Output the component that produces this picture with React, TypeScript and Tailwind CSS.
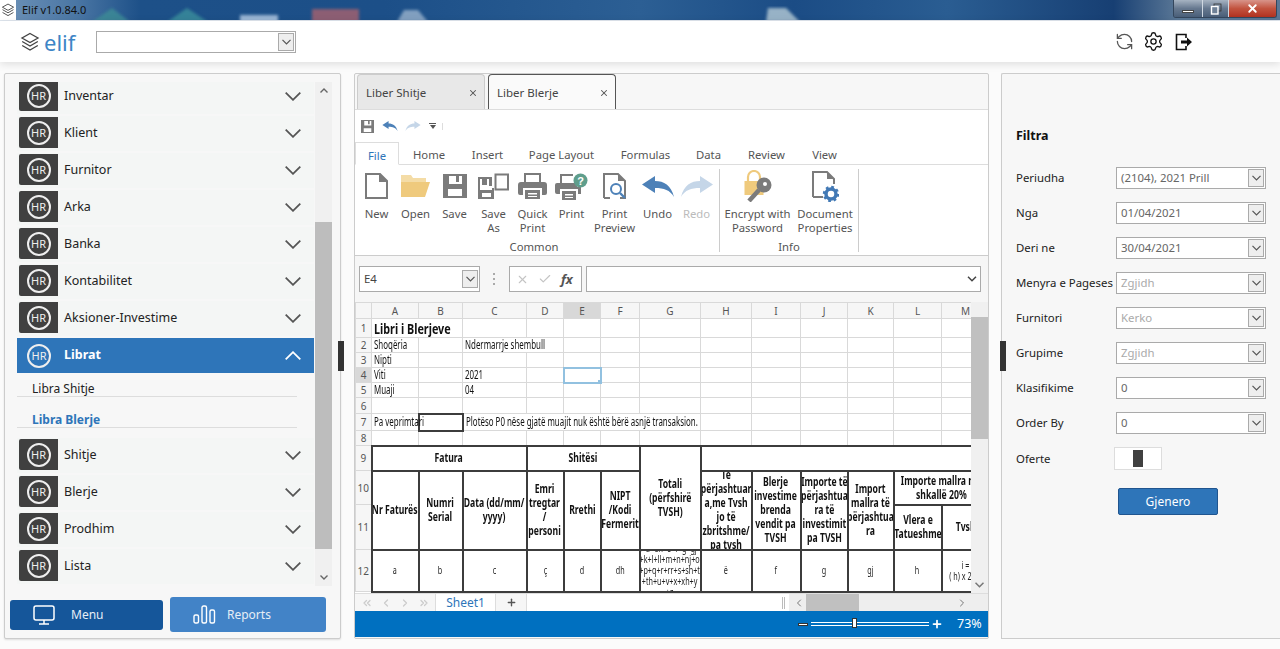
import React from 'react';
import { RefreshCcw, Settings, Plus, ChevronsLeft, ChevronLeft, ChevronRight, ChevronsRight, X, Check } from 'lucide-react';

const UI_FONT = "font-['Open_Sans',sans-serif]";
const SHEET_FONT = "font-['DejaVu_Sans_Condensed','DejaVu_Sans',sans-serif]";

const Chevron = ({ className = 'stroke-[#555]' }: { className?: string }) => (
  <svg width="16" height="9" viewBox="0 0 16 9" fill="none" className={className} strokeWidth="1.8">
    <path d="M0.7 0.7 8 7.8 15.3 0.7" />
  </svg>
);

const LayersIcon = ({ size }: { size: number }) => (
  <svg width={size} height={size} viewBox="0 0 20 20" fill="none" stroke="#444" strokeWidth="1.3">
    <path d="M10 1.5 18 6l-8 4.5L2 6z" />
    <path d="M2.2 9.5 10 14l7.8-4.5" />
    <path d="M2.2 13.5 10 18l7.8-4.5" />
  </svg>
);

// combo box shared by the header, the formula bar and the filters
function Combo({ value, muted, className }: { value?: string; muted?: boolean; className: string }) {
  return (
    <div className={`flex items-center justify-between border border-[#aaa] bg-white pl-[4px] pr-[1px] ${className}`}>
      <span className={`text-[11.4px] ${muted ? 'text-[#aaa]' : 'text-[#666]'}`}>{value}</span>
      <span className="flex h-[18px] w-[16px] items-center justify-center border border-[#aaa] bg-[#eee]">
        <svg width="9" height="6" viewBox="0 0 9 6" fill="none" stroke="#555" strokeWidth="1.2">
          <path d="M0.5 0.8 4.5 4.8 8.5 0.8" />
        </svg>
      </span>
    </div>
  );
}

function TitleBar() {
  return (
    <div className="relative flex h-[21px] shrink-0 items-center overflow-hidden border-b border-[#dfe6ee] bg-[linear-gradient(90deg,#6f93b8_0%,#4a76a4_6%,#1d5088_11%,#1c4f88_30%,#2c5f94_50%,#1b4c85_62%,#2a5d92_74%,#173f73_87%,#5a7796_92%)]">
      <svg className="absolute inset-0" width="1280" height="21">
        <defs>
          <filter id="soft">
            <feGaussianBlur stdDeviation="1.6" />
          </filter>
        </defs>
        <g filter="url(#soft)" opacity="0.8">
          <path d="M92 22 112 8 130 22z" fill="#3d8d96" />
          <path d="M167 22 187 8 208 22z" fill="#3b8f9c" />
          <rect x="240" y="15" width="38" height="8" fill="#b9cfe6" />
          <rect x="312" y="9" width="47" height="14" fill="#a8626e" />
          <path d="M397 22 404 10H418L428 22z" fill="#9ab3cd" />
          <path d="M766 22 768 8H786L800 22z" fill="#b6cbd6" />
        </g>
      </svg>
      <span className="relative flex h-[20px] w-[16px] items-center justify-center bg-white">
        <LayersIcon size={14} />
      </span>
      <span className="relative ml-[6px] text-[11px] text-[#111]">Elif v1.0.84.0</span>
      <div className="absolute right-[3px] top-0 flex h-[18px] overflow-hidden rounded-b-[3px] border border-t-0 border-[#34465c]">
        <span className="flex w-[29px] items-end justify-center border-r border-[#cfd8e2] bg-[linear-gradient(#a6b3c2,#66788f_50%,#4a5f79)] pb-[4px]">
          <span className="h-[3px] w-[12px] border border-[#444] bg-white" />
        </span>
        <span className="flex w-[26px] items-center justify-center border-r border-[#cfd8e2] bg-[linear-gradient(#a6b3c2,#66788f_50%,#4a5f79)]">
          <svg width="12" height="12" viewBox="0 0 12 12" fill="none" stroke="#fff" strokeWidth="1.4">
            <rect x="4" y="1" width="7" height="7" stroke="#333" strokeWidth="0.8" />
            <rect x="1.5" y="3.5" width="6.5" height="7.5" fill="#6f8197" />
          </svg>
        </span>
        <span className="flex w-[47px] items-center justify-center bg-[linear-gradient(#d8948a,#c2533f_50%,#b13220)]">
          <X size={13} strokeWidth={3.5} className="text-white" />
        </span>
      </div>
    </div>
  );
}

function Header() {
  return (
    <header className="relative z-10 flex h-[41px] shrink-0 items-center bg-white pl-[20px] shadow-[0_2px_8px_rgba(0,0,0,0.12)]">
      <LayersIcon size={20} />
      <span className="ml-[4px] w-[52px] text-[22px] leading-none text-[#3d85c6]">elif</span>
      <Combo className="h-[22px] w-[200px]" />
      <div className="ml-auto mr-[87px] flex items-center">
        <RefreshCcw size={19} strokeWidth={1.6} className="text-[#555]" />
        <Settings size={21} strokeWidth={1.5} className="ml-[9px] text-[#111]" />
        <svg width="18" height="18" viewBox="0 0 18 18" className="ml-[11px]" fill="none">
          <path d="M11 5V1.5H1.5v15H11V13" stroke="#111" strokeWidth="1.6" />
          <path d="M6 7.5h6V4.5L17 9l-5 4.5v-3H6z" fill="#111" />
        </svg>
      </div>
    </header>
  );
}

const HrBadge = () => (
  <span className="flex h-[24px] w-[24px] items-center justify-center rounded-full border-2 border-[#eee] text-[11px] leading-none text-[#eee]">HR</span>
);

function NavRow({ label }: { label: string }) {
  return (
    <div className="mb-[2px] flex h-[35px] items-start bg-[#f4f6f5] pl-[2px] pr-[13px] pt-[1px]">
      <span className="flex h-[31px] w-[39px] items-center justify-center rounded-l-[2px] bg-[#404040]">
        <HrBadge />
      </span>
      <span className="ml-[6px] mt-[7px] text-[12.5px] text-[#222]">{label}</span>
      <span className="ml-auto mt-[12px]">
        <Chevron />
      </span>
    </div>
  );
}

function Sidebar() {
  return (
    <aside className="relative flex w-[337px] shrink-0 flex-col rounded-[2px] border border-[#ccc] bg-[#f7f7f7] shadow-[0_1px_2px_rgba(0,0,0,0.12)]">
      <div className="ml-[12px] mt-[8px] flex h-[504px]">
        <div className="w-[297px] overflow-hidden">
          <div className="-mt-[3px]">
            {['Inventar', 'Klient', 'Furnitor', 'Arka', 'Banka', 'Kontabilitet', 'Aksioner-Investime'].map((l) => (
              <NavRow key={l} label={l} />
            ))}
            <div className="flex h-[35px] items-center bg-[#2e75b9] pl-[10px] pr-[13px]">
              <HrBadge />
              <span className="ml-[13px] text-[12.5px] font-bold text-white">Librat</span>
              <span className="ml-auto rotate-180">
                <Chevron className="stroke-white" />
              </span>
            </div>
            <div className="mb-[10px]">
              <div className="flex h-[24px] w-[280px] items-end border-b border-[#ddd] pb-[1px] pl-[15px] text-[12px] leading-[13px] text-[#222]">Libra Shitje</div>
              <div className="flex h-[31px] w-[280px] items-end border-b border-[#ddd] pb-[1px] pl-[15px] text-[12px] font-bold leading-[13px] text-[#2e75b9]">Libra Blerje</div>
            </div>
            {['Shitje', 'Blerje', 'Prodhim', 'Lista'].map((l) => (
              <NavRow key={l} label={l} />
            ))}
          </div>
        </div>
        <div className="ml-[1px] flex w-[17px] flex-col bg-[#f0f0f0]">
          <div className="flex h-[140px] justify-center pt-[6px]">
            <svg width="8" height="5" viewBox="0 0 8 5" fill="none" stroke="#666" strokeWidth="1.4"><path d="M0.5 4.5 4 1l3.5 3.5" /></svg>
          </div>
          <div className="h-[327px] bg-[#bdbdbd]" />
          <div className="flex flex-1 items-end justify-center pb-[6px]">
            <svg width="8" height="5" viewBox="0 0 8 5" fill="none" stroke="#666" strokeWidth="1.4"><path d="M0.5 0.5 4 4l3.5-3.5" /></svg>
          </div>
        </div>
      </div>
      <div className="ml-[5px] mt-[11px] flex items-center gap-[7px]">
        <button className="flex h-[30px] w-[153px] items-center rounded-[3px] bg-[#15569a] pl-[23px] text-[12px] text-[#e6eef6]">
          <svg width="22" height="20" viewBox="0 0 22 20" fill="none" stroke="#fff" strokeWidth="1.5">
            <rect x="1" y="1" width="20" height="14" rx="2" />
            <path d="M11 15v4M6 19h10" />
          </svg>
          <span className="ml-[16px]">Menu</span>
        </button>
        <button className="flex h-[35px] w-[156px] items-center rounded-[3px] bg-[#4283c7] pl-[23px] text-[12px] text-[#e6eef6]">
          <svg width="23" height="19" viewBox="0 0 23 19" fill="none" stroke="#fff" strokeWidth="1.4">
            <rect x="1" y="10" width="4.5" height="8" rx="1.5" />
            <rect x="9" y="1" width="4.5" height="17" rx="1.5" />
            <rect x="17" y="5" width="4.5" height="13" rx="1.5" />
          </svg>
          <span className="ml-[11px]">Reports</span>
        </button>
      </div>
      <span className="absolute -right-[4px] top-[267px] h-[30px] w-[6px] bg-[#333]" />
    </aside>
  );
}

const FileTab = ({ label, active }: { label: string; active?: boolean }) => (
  <div className={`flex h-[35px] w-[128px] items-center justify-between rounded-t-[4px] border border-b-0 pl-[8px] pr-[6px] pt-[1px] text-[11.5px] text-[#444] ${active ? 'border-[#555] bg-[#fafafa]' : 'border-[#ccc] bg-[#e8e8e8]'}`}>
    <span>{label}</span>
    <X size={10} strokeWidth={2.5} className="text-[#555]" />
  </div>
);

const gray = '#7b7b7b';
const ribbonItems: { label: React.ReactNode; width: string; icon: React.ReactNode; muted?: boolean }[] = [
  {
    label: 'New',
    width: 'w-[39px]',
    icon: (
      <svg width="23" height="26" viewBox="0 0 23 26" fill="#fff" stroke={gray} strokeWidth="2">
        <path d="M1 1h14l7 7v17H1z" />
        <path d="M15 1v7h7" fill={gray} />
      </svg>
    ),
  },
  {
    label: 'Open',
    width: 'w-[39px]',
    icon: (
      <svg width="31" height="24" viewBox="0 0 31 24">
        <path d="M1 1h10l2 3h13v4H1z" fill="#f4dca6" />
        <path d="M1 23V8h29l-5 15z" fill="#efca7d" />
      </svg>
    ),
  },
  {
    label: 'Save',
    width: 'w-[39px]',
    icon: (
      <svg width="24" height="24" viewBox="0 0 24 24" fill={gray}>
        <path d="M0 0h24v24H0zM6 2v8h13V2h-3v6h-3V2zM5 15v7h14v-7z" fillRule="evenodd" />
      </svg>
    ),
  },
  {
    label: <>Save<br />As</>,
    width: 'w-[39px]',
    icon: (
      <svg width="31" height="27" viewBox="0 0 31 27" fill={gray}>
        <path d="M0 4h14v9h-3V6H9v6H4V6H2v11h12v-2h2v11H0zM4 20v4h9v-4z" fillRule="evenodd" />
        <path d="M17.5 1.5h12.5v15H17.5z" fill="none" stroke={gray} strokeWidth="2" />
      </svg>
    ),
  },
  {
    label: <>Quick<br />Print</>,
    width: 'w-[39px]',
    icon: (
      <svg width="29" height="26" viewBox="0 0 29 26" fill={gray}>
        <path d="M6 0h17v9h-2V2H8v7H6zM3 9h23a3 3 0 0 1 3 3v8a2 2 0 0 1-2 2h-3v-7H5v7H2a2 2 0 0 1-2-2v-8a3 3 0 0 1 3-3z" />
        <path d="M7 17h15v9H7zM10 20v1.5h9V20zM10 23v1h9v-1z" fillRule="evenodd" />
      </svg>
    ),
  },
  {
    label: 'Print',
    width: 'w-[39px]',
    icon: (
      <svg width="33" height="27" viewBox="0 0 33 27" fill={gray}>
        <path d="M5 1h13v2H7v7H5zM2 10h20v4h4v7h-3v-5H5v5H2a2 2 0 0 1-2-2v-7a2 2 0 0 1 2-2z" />
        <path d="M7 18h14v9H7zM10 21v1.5h8V21zM10 24v1h8v-1z" fillRule="evenodd" />
        <circle cx="25.5" cy="7.5" r="7" fill="#5f9e8c" />
        <text x="25.5" y="11.5" textAnchor="middle" fontSize="11" fontWeight="700" fill="#fff" fontFamily="Liberation Sans">?</text>
      </svg>
    ),
  },
  {
    label: <>Print<br />Preview</>,
    width: 'w-[47px]',
    icon: (
      <svg width="24" height="26" viewBox="0 0 24 26" fill="none">
        <path d="M1 25V1h14l7 7v17h-5" stroke={gray} strokeWidth="2" />
        <path d="M15 1v7h7z" fill={gray} />
        <path d="M1 25h6" stroke={gray} strokeWidth="2" />
        <circle cx="13" cy="16" r="5" stroke="#4d81b8" strokeWidth="2" />
        <path d="m17 20 5 5" stroke="#4d81b8" strokeWidth="2.4" />
      </svg>
    ),
  },
  {
    label: 'Undo',
    width: 'w-[39px]',
    icon: (
      <svg width="32" height="21" viewBox="0 0 32 21" fill="#4d81b8">
        <path d="M0 8.5 13 0v5c9 0 16 4 19 16-4-7-10-9-19-9v5z" />
      </svg>
    ),
  },
  {
    label: 'Redo',
    width: 'w-[39px]',
    muted: true,
    icon: (
      <svg width="32" height="21" viewBox="0 0 32 21" fill="#c5d6e8">
        <path d="M32 8.5 19 0v5C10 5 3 9 0 21c4-7 10-9 19-9v5z" />
      </svg>
    ),
  },
];

function Ribbon() {
  return (
    <div className="flex h-[91px] shrink-0 border-b border-[#ccc] bg-white pt-[4px]">
      <div className="flex h-[83px] w-[365px] flex-col items-center border-r border-[#ccc]">
        <div className="flex h-[66px] w-full pl-[2px]">
          {ribbonItems.map((it, i) => (
            <div key={i} className={`flex shrink-0 flex-col items-center ${it.width}`}>
              <div className="flex h-[34px] items-center justify-center">{it.icon}</div>
              <div className={`mt-[4px] text-center text-[11.3px] leading-[14px] ${it.muted ? 'text-[#bbb]' : 'text-[#555]'}`}>{it.label}</div>
            </div>
          ))}
        </div>
        <div className="mt-[5px] -translate-x-[3px] text-[11.3px] leading-[14px] text-[#555]">Common</div>
      </div>
      <div className="flex h-[83px] w-[139px] flex-col items-center border-r border-[#ccc]">
        <div className="flex h-[66px] w-full">
          <div className="flex w-[75px] shrink-0 flex-col items-center">
            <div className="flex h-[34px] items-center justify-center">
              <svg width="28" height="32" viewBox="0 0 28 32" fill="none">
                <path d="M4 12V7a6 6 0 0 1 12 0v5" stroke="#efca7d" strokeWidth="2.2" />
                <rect x="0.5" y="11" width="19" height="14" fill="#efca7d" />
                <path d="M5 31 15 20" stroke={gray} strokeWidth="4.5" />
                <circle cx="20" cy="15" r="7.5" fill={gray} />
                <circle cx="21" cy="14" r="2" fill="#fff" />
              </svg>
            </div>
            <div className="mt-[4px] text-center text-[11.3px] leading-[14px] text-[#555]">Encrypt with<br />Password</div>
          </div>
          <div className="flex w-[60px] shrink-0 flex-col items-center">
            <div className="flex h-[34px] items-center justify-center">
              <svg width="27" height="31" viewBox="0 0 27 31" fill="none">
                <path d="M1 26V1h14l7 7v5M1 26h10" stroke={gray} strokeWidth="2" />
                <path d="M15 1v7h7z" fill={gray} />
                <circle cx="19" cy="23" r="5" stroke="#4279b5" strokeWidth="3.5" />
                <circle cx="19" cy="23" r="7" stroke="#4279b5" strokeWidth="2.4" strokeDasharray="2.7 2.8" />
              </svg>
            </div>
            <div className="mt-[4px] text-center text-[11.3px] leading-[14px] text-[#555]">Document<br />Properties</div>
          </div>
        </div>
        <div className="mt-[5px] text-[11.3px] leading-[14px] text-[#555]">Info</div>
      </div>
    </div>
  );
}

function FormulaBar() {
  return (
    <div className="flex h-[46px] shrink-0 items-center bg-[#f6f6f6] pl-[4px]">
      <Combo value="E4" className="h-[26px] w-[121px] [&>span:first-child]:text-[#444]" />
      <span className="ml-[13px] flex w-[3px] flex-col gap-[3px]">
        <i className="h-[2px] w-[2px] bg-[#aaa]" />
        <i className="h-[2px] w-[2px] bg-[#aaa]" />
        <i className="h-[2px] w-[2px] bg-[#aaa]" />
      </span>
      <div className="ml-[13px] flex h-[26px] w-[73px] items-center gap-[9px] border border-[#aaa] bg-white pl-[6px] text-[#c4c4c4]">
        <X size={13} strokeWidth={2} />
        <Check size={14} strokeWidth={2} />
        <span className="font-['Liberation_Serif',serif] text-[13px] font-bold italic leading-none text-[#555]">fx</span>
      </div>
      <div className="ml-[4px] flex h-[26px] w-[395px] items-center justify-end border border-[#aaa] bg-white pr-[3px]">
        <svg width="10" height="6" viewBox="0 0 10 6" fill="none" stroke="#444" strokeWidth="1.5"><path d="M1 0.8 5 4.8 9 0.8" /></svg>
      </div>
    </div>
  );
}

const grid = 'border border-[#d9d9d9]';
const thick = 'border-2 border-[#3c3c3c]';
const rowHead = `${grid} p-0 text-center text-[10px] leading-none text-[#555] ${UI_FONT}`;

// the sheet uses a condensed face that isn't installed, so the text is squeezed horizontally
const Squeeze = ({ children }: { children: React.ReactNode }) => (
  <span className="inline-block origin-left scale-x-[0.66] whitespace-nowrap">{children}</span>
);

// spreadsheet cell: the inner box fixes the height so long text gets clipped instead of growing the row
function Head({ children, box, colSpan, rowSpan }: { children?: React.ReactNode; box: string; colSpan?: number; rowSpan?: number }) {
  return (
    <td colSpan={colSpan} rowSpan={rowSpan} className={`${thick} p-0`}>
      <div className={`flex items-center justify-center overflow-hidden text-center text-[12px] font-bold leading-[14px] text-[#111] ${box}`}>
        <div className="shrink-0 scale-x-[0.72] whitespace-nowrap">{children}</div>
      </div>
    </td>
  );
}

function Small({ children }: { children: React.ReactNode }) {
  return (
    <td className={`${thick} p-0 text-center text-[10px] leading-[11px] text-[#222]`}>
      <div className="flex h-[40px] items-center justify-center overflow-hidden">
        <div className="shrink-0 scale-x-[0.72] whitespace-nowrap">{children}</div>
      </div>
    </td>
  );
}

function RowNo({ n, on }: { n: number; on?: boolean }) {
  return <td className={`${rowHead} ${on ? 'bg-[#d8d8d8]' : 'bg-[#f6f6f6]'}`}>{n}</td>;
}

const widths = ['w-[16px]', 'w-[47px]', 'w-[44px]', 'w-[64px]', 'w-[37px]', 'w-[37px]', 'w-[39px]', 'w-[61px]', 'w-[51px]', 'w-[49px]', 'w-[47px]', 'w-[46px]', 'w-[48px]', 'w-[48px]'];
const letters = ['', 'A', 'B', 'C', 'D', 'E', 'F', 'G', 'H', 'I', 'J', 'K', 'L', 'M'];

const Blank = ({ n }: { n: number }) => (
  <>
    {Array.from({ length: n }).map((_, i) => (
      <td key={i} className={grid} />
    ))}
  </>
);

function SheetTable() {
  const txt = 'px-[2px] text-[12px] leading-none text-[#111] whitespace-nowrap';
  return (
    <table className={`w-[634px] shrink-0 table-fixed border-collapse ${SHEET_FONT}`}>
      <colgroup>
        {widths.map((w, i) => (
          <col key={i} className={w} />
        ))}
      </colgroup>
      <tbody>
        <tr className="h-[16px]">
          {letters.map((l) => (
            <td key={l} className={`${rowHead} ${l === 'E' ? 'bg-[#d8d8d8]' : 'bg-[#f6f6f6]'}`}>{l}</td>
          ))}
        </tr>
        <tr className="h-[19px]">
          <RowNo n={1} />
          <td colSpan={2} className={`${grid} px-[2px] text-[15px] font-bold leading-none whitespace-nowrap text-[#111]`}>
            <span className="inline-block origin-left scale-x-[0.72]">Libri i Blerjeve</span>
          </td>
          <Blank n={11} />
        </tr>
        <tr className="h-[15px]">
          <RowNo n={2} />
          <td className={`${grid} ${txt}`}><Squeeze>Shoqëria</Squeeze></td>
          <Blank n={1} />
          <td colSpan={2} className={`${grid} ${txt}`}><Squeeze>Ndermarrje shembull</Squeeze></td>
          <Blank n={9} />
        </tr>
        <tr className="h-[15px]">
          <RowNo n={3} />
          <td className={`${grid} ${txt}`}><Squeeze>Nipti</Squeeze></td>
          <Blank n={12} />
        </tr>
        <tr className="h-[15px]">
          <RowNo n={4} on />
          <td className={`${grid} ${txt}`}><Squeeze>Viti</Squeeze></td>
          <Blank n={1} />
          <td className={`${grid} ${txt}`}><Squeeze>2021</Squeeze></td>
          <Blank n={1} />
          <td className="relative border-2 border-[#92c1e0]">
            <span className="absolute -bottom-[2px] -right-[2px] h-[4px] w-[4px] bg-[#92c1e0]" />
          </td>
          <Blank n={8} />
        </tr>
        <tr className="h-[15px]">
          <RowNo n={5} />
          <td className={`${grid} ${txt}`}><Squeeze>Muaji</Squeeze></td>
          <Blank n={1} />
          <td className={`${grid} ${txt}`}><Squeeze>04</Squeeze></td>
          <Blank n={10} />
        </tr>
        <tr className="h-[16px]">
          <RowNo n={6} />
          <Blank n={13} />
        </tr>
        <tr className="h-[17px]">
          <RowNo n={7} />
          <td className={`${grid} ${txt}`}><Squeeze>Pa veprimtari</Squeeze></td>
          <td className={thick} />
          <td colSpan={5} className={`${grid} ${txt}`}><Squeeze>Plotëso P0 nëse gjatë muajit nuk është bërë asnjë transaksion.</Squeeze></td>
          <Blank n={6} />
        </tr>
        <tr className="h-[15px]">
          <RowNo n={8} />
          <Blank n={13} />
        </tr>
        <tr className="h-[25px]">
          <RowNo n={9} />
          <Head colSpan={3} box="h-[23px]">Fatura</Head>
          <Head colSpan={3} box="h-[23px]">Shitësi</Head>
          <Head rowSpan={3} box="h-[102px]">Totali<br />(përfshirë<br />TVSH)</Head>
          <Head colSpan={6} box="h-[23px]" />
        </tr>
        <tr className="h-[34px]">
          <RowNo n={10} />
          <Head rowSpan={2} box="h-[77px]">Nr Faturës</Head>
          <Head rowSpan={2} box="h-[77px]">Numri<br />Serial</Head>
          <Head rowSpan={2} box="h-[77px]">Data (dd/mm/<br />yyyy)</Head>
          <Head rowSpan={2} box="h-[77px]">Emri<br />tregtar<br />/<br />personi</Head>
          <Head rowSpan={2} box="h-[77px]">Rrethi</Head>
          <Head rowSpan={2} box="h-[77px]">NIPT<br />/Kodi<br />Fermerit</Head>
          <Head rowSpan={2} box="h-[77px]">Të<br />përjashtuar<br />a,me Tvsh<br />jo të<br />zbritshme/<br />pa tvsh</Head>
          <Head rowSpan={2} box="h-[77px]">Blerje<br />investime<br />brenda<br />vendit pa<br />TVSH</Head>
          <Head rowSpan={2} box="h-[77px]">Importe të<br />përjashtua<br />ra të<br />investimit<br />pa TVSH</Head>
          <Head rowSpan={2} box="h-[77px]">Import<br />mallra të<br />përjashtua<br />ra</Head>
          <Head colSpan={2} box="h-[32px]">Importe mallra me<br />shkallë 20%</Head>
        </tr>
        <tr className="h-[45px]">
          <RowNo n={11} />
          <Head box="h-[43px]">Vlera e<br />Tatueshme</Head>
          <Head box="h-[43px]">Tvsh</Head>
        </tr>
        <tr className="h-[42px]">
          <RowNo n={12} />
          {['a', 'b', 'c', 'ç', 'd', 'dh'].map((t) => (
            <Small key={t}>{t}</Small>
          ))}
          <Small>+ç+d+dh+e+f+g+gj+h<br />+k+l+ll+m+n+nj+o<br />+p+q+r+rr+s+sh+t<br />+th+u+v+x+xh+y<br />+z</Small>
          {['ë', 'f', 'g', 'gj', 'h'].map((t) => (
            <Small key={t}>{t}</Small>
          ))}
          <Small>i =<br />( h) x 20%</Small>
        </tr>
      </tbody>
    </table>
  );
}

function SheetTabs() {
  return (
    <div className="flex h-[18px] shrink-0 items-center border-t border-[#ddd] bg-white text-[#ccc]">
      <div className="flex h-full w-[81px] items-center justify-around border-r border-[#ddd] bg-[#f6f6f6] px-[2px]">
        <ChevronsLeft size={12} strokeWidth={2.5} />
        <ChevronLeft size={12} strokeWidth={2.5} />
        <ChevronRight size={12} strokeWidth={2.5} />
        <ChevronsRight size={12} strokeWidth={2.5} />
      </div>
      <div className={`flex h-full w-[60px] items-center justify-center border-r border-[#ddd] text-[12px] text-[#2e75b9] ${UI_FONT}`}>Sheet1</div>
      <div className="flex h-full w-[31px] items-center justify-center border-r border-[#ddd] bg-[#f6f6f6]">
        <Plus size={11} strokeWidth={3} className="text-[#555]" />
      </div>
      <div className="flex h-full flex-1 items-center justify-end pr-[4px]">
        <span className="h-[12px] w-[3px] border-x border-[#bbb]" />
      </div>
      <div className="flex h-full w-[199px] items-center bg-[#eee] pl-[4px] text-[#777]">
        <ChevronLeft size={12} strokeWidth={2} />
        <span className="ml-[1px] h-full w-[53px] bg-[#c0c0c0]" />
        <ChevronRight size={12} strokeWidth={2} className="ml-[97px]" />
      </div>
    </div>
  );
}

function Workbook() {
  return (
    <section className={`flex h-full w-[635px] shrink-0 flex-col rounded-[2px] border border-[#ccc] bg-[#f7f7f7] ${UI_FONT}`}>
      <div className="flex h-[36px] shrink-0 items-end gap-[3px] border-b border-[#ddd] pl-[2px]">
        <FileTab label="Liber Shitje" />
        <FileTab label="Liber Blerje" active />
      </div>
      <div className="flex h-[32px] shrink-0 items-center bg-white pl-[6px]">
        <svg width="13" height="13" viewBox="0 0 24 24" fill={gray}>
          <path d="M0 0h24v24H0zM6 2v8h13V2h-3v6h-3V2zM5 15v7h14v-7z" fillRule="evenodd" />
        </svg>
        <svg width="16" height="10" viewBox="0 0 32 21" fill="#4d81b8" className="ml-[8px]">
          <path d="M0 8.5 13 0v5c9 0 16 4 19 16-4-7-10-9-19-9v5z" />
        </svg>
        <svg width="16" height="10" viewBox="0 0 32 21" fill="#c5d6e8" className="ml-[7px]">
          <path d="M32 8.5 19 0v5C10 5 3 9 0 21c4-7 10-9 19-9v5z" />
        </svg>
        <span className="ml-[8px] flex flex-col items-center gap-[1px]">
          <i className="h-[1px] w-[7px] bg-[#555]" />
          <i className="h-0 w-0 border-x-[3.5px] border-t-[4px] border-x-transparent border-t-[#555]" />
        </span>
        <i className="ml-[6px] h-[7px] w-px bg-[#ddd]" />
      </div>
      <div className="flex h-[23px] shrink-0 items-end border-b border-[#ddd] bg-white text-[11.3px] text-[#555]">
        <span className="-mb-px flex h-[23px] w-[44px] items-center justify-center border border-b-white border-[#ddd] bg-white pt-[5px] text-[#2e75b9]">File</span>
        <span className="flex h-[22px] w-[60px] items-center justify-center pt-[5px]">Home</span>
        <span className="flex h-[22px] w-[57px] items-center justify-center pt-[5px]">Insert</span>
        <span className="flex h-[22px] w-[91px] items-center justify-center pt-[5px]">Page Layout</span>
        <span className="flex h-[22px] w-[77px] items-center justify-center pt-[5px]">Formulas</span>
        <span className="flex h-[22px] w-[49px] items-center justify-center pt-[5px]">Data</span>
        <span className="flex h-[22px] w-[67px] items-center justify-center pt-[5px]">Review</span>
        <span className="flex h-[22px] w-[49px] items-center justify-center pt-[5px]">View</span>
      </div>
      <Ribbon />
      <FormulaBar />
      <div className="flex h-[291px] shrink-0 bg-white">
        <div className="w-[616px] overflow-hidden">
          <SheetTable />
        </div>
        <div className="flex w-[17px] flex-col bg-[#f0f0f0]">
          <div className="mt-[15px] h-[122px] bg-[#c0c0c0]" />
          <div className="flex flex-1 items-end justify-center pb-[5px]">
            <svg width="9" height="6" viewBox="0 0 9 6" fill="none" stroke="#777" strokeWidth="1.5"><path d="M0.5 0.8 4.5 4.8 8.5 0.8" /></svg>
          </div>
        </div>
      </div>
      <SheetTabs />
      <div className="flex h-[26px] shrink-0 items-center bg-[#0070c0] pl-[443px] text-white">
        <i className="h-[3px] w-[10px] border border-[#333] bg-white" />
        <div className="relative ml-[3px] h-[4px] w-[118px] border-y border-white">
          <i className="absolute left-[41px] top-[-5px] h-[10px] w-[5px] border border-[#333] bg-white" />
        </div>
        <Plus size={12} strokeWidth={3.5} className="ml-[2px]" />
        <span className="ml-[14px] text-[12.5px]">73%</span>
      </div>
    </section>
  );
}

function Filters() {
  const rows: { label: string; value: string; muted?: boolean }[] = [
    { label: 'Periudha', value: '(2104), 2021 Prill' },
    { label: 'Nga', value: '01/04/2021' },
    { label: 'Deri ne', value: '30/04/2021' },
    { label: 'Menyra e Pageses', value: 'Zgjidh', muted: true },
    { label: 'Furnitori', value: 'Kerko', muted: true },
    { label: 'Grupime', value: 'Zgjidh', muted: true },
    { label: 'Klasifikime', value: '0' },
    { label: 'Order By', value: '0' },
  ];
  return (
    <aside className="relative -ml-px flex h-full flex-1 flex-col rounded-tl-[2px] border border-r-0 border-[#ccc] bg-[#f7f7f7] pl-[14px]">
      <div className="mt-[53px] text-[12.5px] font-bold leading-[18px] text-[#111]">Filtra</div>
      <div className="mt-[22px] flex flex-col gap-[13px]">
        {rows.map((r) => (
          <div key={r.label} className="flex h-[22px] items-center">
            <span className="w-[100px] shrink-0 whitespace-nowrap text-[11.4px] text-[#222]">{r.label}</span>
            <Combo value={r.value} muted={r.muted} className="h-[22px] w-[150px]" />
          </div>
        ))}
        <div className="flex h-[23px] items-center">
          <span className="w-[98px] shrink-0 text-[11.4px] text-[#222]">Oferte</span>
          <span className="flex h-[23px] w-[48px] items-center justify-center border border-[#ddd] bg-white">
            <i className="h-[17px] w-[10px] bg-[#404040]" />
          </span>
        </div>
      </div>
      <button className="ml-[102px] mt-[18px] h-[27px] w-[100px] rounded-[2px] border border-[#20558f] bg-[#2e75b9] text-[12px] text-white">Gjenero</button>
      <span className="absolute -left-[2px] top-[267px] h-[30px] w-[6px] bg-[#333]" />
    </aside>
  );
}

export default function App() {
  return (
    <div className={`flex h-[649px] w-[1280px] flex-col overflow-hidden bg-[#fbfbfb] ${UI_FONT}`}>
      <TitleBar />
      <Header />
      <main className="flex min-h-0 flex-1 gap-[13px] pb-[10px] pl-[4px] pt-[11px]">
        <Sidebar />
        <Workbook />
        <Filters />
      </main>
    </div>
  );
}
